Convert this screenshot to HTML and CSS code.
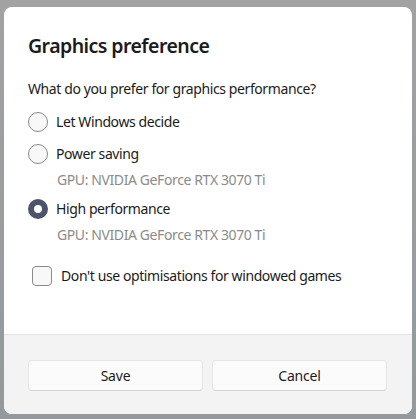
FILE: index.html
```html
<!DOCTYPE html>
<html>
<head>
<meta charset="utf-8">
<link rel="stylesheet" href="styles.css">
</head>
<body>
<div class="dialog">
  <div class="content">
    <h1 class="title">Graphics preference</h1>
    <p class="question">What do you prefer for graphics performance?</p>
    <div class="option">
      <span class="radio"></span><span class="label">Let Windows decide</span>
    </div>
    <div class="option">
      <span class="radio"></span><span class="label">Power saving</span>
    </div>
    <div class="sub">GPU: NVIDIA GeForce RTX 3070 Ti</div>
    <div class="option option-third">
      <span class="radio checked"></span><span class="label">High performance</span>
    </div>
    <div class="sub">GPU: NVIDIA GeForce RTX 3070 Ti</div>
    <div class="check-row">
      <span class="checkbox"></span><span class="label">Don't use optimisations for windowed games</span>
    </div>
  </div>
  <div class="footer">
    <button class="btn">Save</button>
    <button class="btn">Cancel</button>
  </div>
</div>
</body>
</html>
```
FILE: styles.css
```css
html, body {
  margin: 0;
  height: 100%;
}
body {
  background: linear-gradient(180deg, #a2a2a3 0%, #95989c 100%);
  padding: 7px 4px 5px 4px;
  box-sizing: border-box;
  font-family: "Noto Sans", "Open Sans", sans-serif;
  color: #1b1b1b;
}
.dialog {
  width: 408px;
  height: 407px;
  background: #ffffff;
  border-radius: 8px;
  overflow: hidden;
  display: flex;
  flex-direction: column;
}
.content {
  flex: 1;
  padding: 25px 24px 0 24px;
}
.title {
  margin: 0;
  font-size: 19.5px;
  letter-spacing: -0.55px;
  line-height: 28px;
  font-weight: 600;
}
.question {
  margin: 19px 0 7px 0;
  font-size: 14px;
  letter-spacing: -0.4px;
  line-height: 20px;
}
.option {
  display: flex;
  align-items: center;
  height: 32px;
}
.option-third {
  margin-top: 3px;
}
.radio {
  width: 18px;
  height: 18px;
  border: 1px solid #8a8a8a;
  border-radius: 50%;
  background: #f8f8f8;
  margin-left: 0;
  margin-right: 8px;
  box-sizing: content-box;
  flex: none;
}
.radio.checked {
  width: 8px;
  height: 8px;
  border: 6px solid #4b5468;
  background: #ffffff;
}
.label {
  font-size: 14px;
  letter-spacing: -0.4px;
  line-height: 20px;
}
.sub {
  margin-left: 29px;
  font-size: 14px;
  letter-spacing: -0.4px;
  line-height: 20px;
  color: #8b8b8b;
}
.check-row {
  display: flex;
  align-items: center;
  height: 31px;
  margin-top: 15px;
}
.checkbox {
  width: 18px;
  height: 18px;
  border: 1px solid #8a8a8a;
  border-radius: 4px;
  background: #f8f8f8;
  margin-left: 4px;
  margin-right: 9px;
  flex: none;
}
.footer {
  height: 80px;
  box-sizing: border-box;
  background: #f3f3f3;
  border-top: 1px solid #e5e5e5;
  padding: 25px 25px 0 24px;
  display: grid;
  grid-template-columns: 1fr 1fr;
  gap: 9px;
  align-items: start;
}
.btn {
  height: 31px;
  font-family: inherit;
  font-size: 14px;
  letter-spacing: -0.2px;
  color: #1b1b1b;
  background: #fbfbfb;
  border: 1px solid #e6e6e6;
  border-bottom-color: #d4d4d4;
  border-radius: 4px;
}
```
